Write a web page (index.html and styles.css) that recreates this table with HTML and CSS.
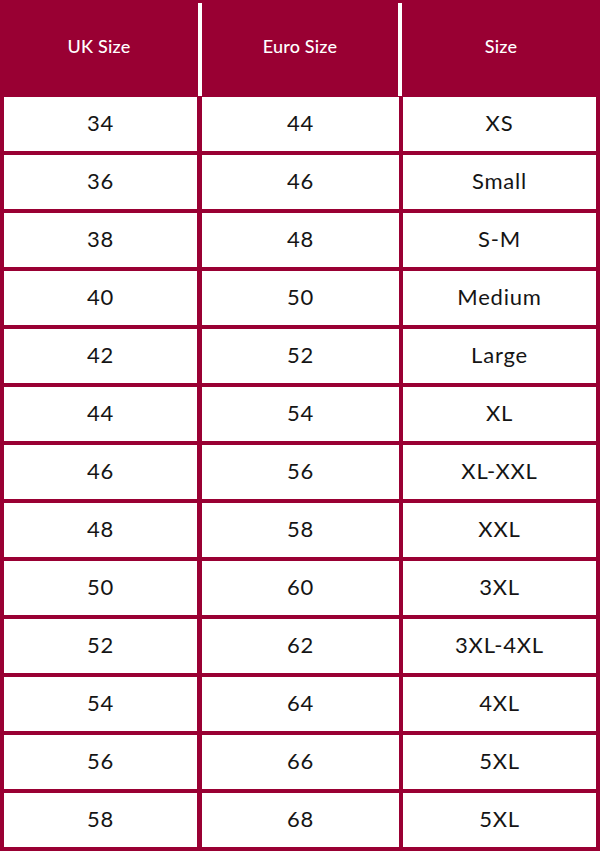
FILE: index.html
```html
<!DOCTYPE html>
<html>
<head>
<meta charset="utf-8">
<link rel="stylesheet" href="styles.css">
</head>
<body>
<div class="chart">
  <div class="head">
    <div class="hcell">UK Size</div>
    <div class="hcell sep">Euro Size</div>
    <div class="hcell sep">Size</div>
  </div>
  <div class="body">
    <div class="cell">34</div><div class="cell">44</div><div class="cell">XS</div>
    <div class="cell">36</div><div class="cell">46</div><div class="cell">Small</div>
    <div class="cell">38</div><div class="cell">48</div><div class="cell">S-M</div>
    <div class="cell">40</div><div class="cell">50</div><div class="cell">Medium</div>
    <div class="cell">42</div><div class="cell">52</div><div class="cell">Large</div>
    <div class="cell">44</div><div class="cell">54</div><div class="cell">XL</div>
    <div class="cell">46</div><div class="cell">56</div><div class="cell">XL-XXL</div>
    <div class="cell">48</div><div class="cell">58</div><div class="cell">XXL</div>
    <div class="cell">50</div><div class="cell">60</div><div class="cell">3XL</div>
    <div class="cell">52</div><div class="cell">62</div><div class="cell">3XL-4XL</div>
    <div class="cell">54</div><div class="cell">64</div><div class="cell">4XL</div>
    <div class="cell">56</div><div class="cell">66</div><div class="cell">5XL</div>
    <div class="cell">58</div><div class="cell">68</div><div class="cell">5XL</div>
  </div>
</div>
</body>
</html>
```
FILE: styles.css
```css
html, body {
  margin: 0;
  padding: 0;
  background: #990033;
}
.chart {
  width: 600px;
  height: 851px;
  background: #990033;
  font-family: Lato, "Open Sans", sans-serif;
  overflow: hidden;
}
.head {
  display: grid;
  grid-template-columns: 198px 200px 202px;
  height: 97px;
  padding-top: 3px;
  padding-bottom: 1px;
  box-sizing: border-box;
}
.hcell {
  display: flex;
  align-items: center;
  justify-content: center;
  color: #ffffff;
  font-size: 18px;
  font-weight: 500;
  letter-spacing: 0.2px;
  padding-bottom: 8px;
}
.hcell.sep {
  border-left: 4px solid #ffffff;
}
.body {
  display: grid;
  grid-template-columns: 193px 196px 193px;
  grid-auto-rows: 54px;
  column-gap: 5px;
  row-gap: 4px;
  padding: 0 5px 4px 4px;
}
.body .cell:nth-child(3n+2) {
  margin-right: -1px;
}
.cell {
  background: #ffffff;
  color: #151515;
  display: flex;
  align-items: center;
  justify-content: center;
  font-size: 22px;
  letter-spacing: 0.8px;
  padding-bottom: 4px;
  box-sizing: border-box;
}
```
